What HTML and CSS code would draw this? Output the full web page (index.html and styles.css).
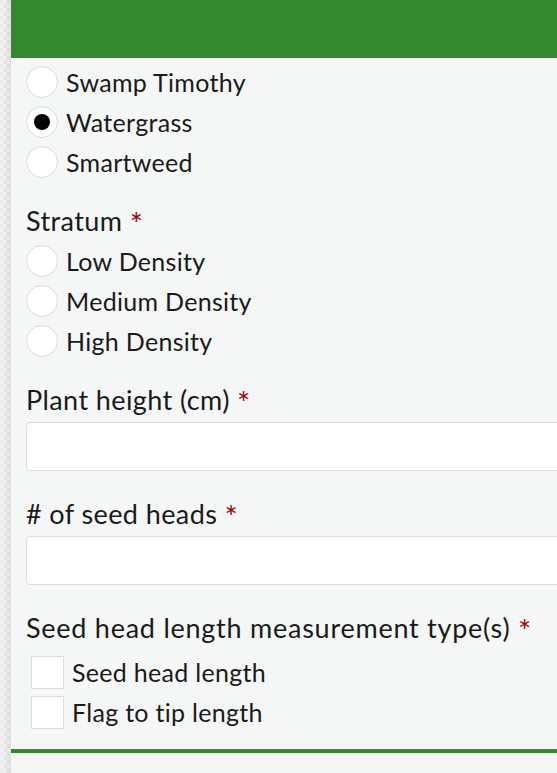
FILE: index.html
```html
<!DOCTYPE html>
<html>
<head>
<meta charset="utf-8">
<link rel="stylesheet" href="styles.css">
</head>
<body>
<div class="page">
  <div class="strip"></div>
  <div class="panel">
    <div class="header"></div>
    <div class="form">
      <div class="options first">
        <label class="opt"><span class="radio"></span><span class="opt-text">Swamp Timothy</span></label>
        <label class="opt"><span class="radio checked"></span><span class="opt-text">Watergrass</span></label>
        <label class="opt"><span class="radio"></span><span class="opt-text">Smartweed</span></label>
      </div>
      <div class="field">
        <div class="label">Stratum <span class="req">*</span></div>
        <div class="options radios">
          <label class="opt"><span class="radio"></span><span class="opt-text">Low Density</span></label>
          <label class="opt"><span class="radio"></span><span class="opt-text">Medium Density</span></label>
          <label class="opt"><span class="radio"></span><span class="opt-text">High Density</span></label>
        </div>
      </div>
      <div class="field">
        <div class="label">Plant height (cm) <span class="req">*</span></div>
        <div class="input"></div>
      </div>
      <div class="field after-input">
        <div class="label"># of seed heads <span class="req">*</span></div>
        <div class="input"></div>
      </div>
      <div class="field after-input">
        <div class="label long">Seed head length measurement type(s) <span class="req">*</span></div>
        <div class="options checks">
          <label class="opt"><span class="check"></span><span class="opt-text">Seed head length</span></label>
          <label class="opt"><span class="check"></span><span class="opt-text">Flag to tip length</span></label>
        </div>
      </div>
    </div>
    <div class="footer-line"></div>
  </div>
</div>
</body>
</html>
```

FILE: styles.css
```css
html, body {
  margin: 0;
  padding: 0;
  height: 100%;
  overflow: hidden;
}
body {
  font-family: "Lato", "Open Sans", sans-serif;
  color: #1a1a1a;
  background: #f5f7f7;
}
.page {
  display: flex;
  height: 773px;
}
.strip {
  width: 11px;
  flex: none;
  background:
    linear-gradient(to right, rgba(255,255,255,0.3), rgba(0,0,0,0.04) 80%, rgba(0,0,0,0.09)),
    repeating-conic-gradient(#f2f2f2 0 25%, #e6e6e6 0 50%) 0 0 / 7px 8px;
}
.panel {
  flex: none;
  width: 620px;
  background: #f5f7f7;
  display: flex;
  flex-direction: column;
}
.header {
  height: 58px;
  background: #338a2e;
}
.form {
  padding: 4px 0 0 15px;
  display: flex;
  flex-direction: column;
}
.options {
  display: flex;
  flex-direction: column;
}
.radios {
  margin-top: 3px;
}
.checks {
  margin-top: 7px;
}
.opt {
  display: flex;
  align-items: center;
  height: 40px;
  gap: 8px;
  font-size: 25px;
  letter-spacing: 0.3px;
}
.radio {
  width: 30px;
  height: 30px;
  border: 1px solid #dcdcdc;
  border-radius: 50%;
  background: #fff;
  display: flex;
  align-items: center;
  justify-content: center;
}
.radio.checked::after {
  content: "";
  width: 16px;
  height: 16px;
  border-radius: 50%;
  background: #000;
}
.checks .opt {
  padding-left: 5px;
}
.check {
  width: 31px;
  height: 31px;
  border: 1px solid #dcdcdc;
  background: #fff;
}
.field {
  margin-top: 22px;
}
.field.after-input {
  margin-top: 26px;
}
.label {
  font-size: 27px;
  line-height: 34px;
  letter-spacing: 0.4px;
}
.label.long {
  letter-spacing: 0.75px;
}
.req {
  color: #a80000;
  font-size: 31px;
  line-height: 0;
  letter-spacing: 0;
  vertical-align: -4px;
}
.input {
  margin-top: 5px;
  height: 47px;
  border: 1px solid #dcdcdc;
  border-radius: 4px;
  background: #fff;
}
.footer-line {
  margin-top: 17px;
  height: 4px;
  background: #338a2e;
}
```
